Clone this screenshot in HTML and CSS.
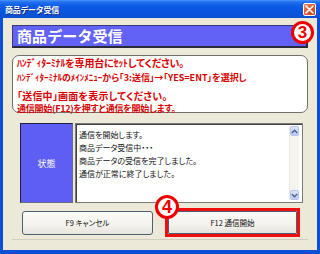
FILE: index.html
```html
<!DOCTYPE html>
<html lang="ja">
<head>
<meta charset="utf-8">
<title>商品データ受信</title>
<link rel="stylesheet" href="styles.css">
</head>
<body>
<div class="window">
  <div class="titlebar">
    <span class="title">商品データ受信</span>
    <span class="close">
      <svg width="9" height="9" viewBox="0 0 9 9"><path d="M1 1L8 8M8 1L1 8" stroke="#fff" stroke-width="1.6" stroke-linecap="round"/></svg>
    </span>
  </div>
  <div class="body">
    <div class="banner">商品データ受信</div>
    <div class="notice">
      <div class="line l1">ﾊﾝﾃﾞｨﾀｰﾐﾅﾙを専用台にｾｯﾄしてください。</div>
      <div class="line l2">ﾊﾝﾃﾞｨﾀｰﾐﾅﾙのﾒｲﾝﾒﾆｭｰから「3:送信」→「YES=ENT」を選択し</div>
      <div class="line l3">「送信中」画面を表示してください。</div>
      <div class="line l4">通信開始(F12)を押すと通信を開始します。</div>
    </div>
    <div class="status">
      <div class="status-label">状態</div>
      <div class="status-box">
        <div class="log">
          <div>通信を開始します。</div>
          <div>商品データ受信中・・・</div>
          <div>商品データの受信を完了しました。</div>
          <div>通信が正常に終了しました。</div>
        </div>
        <div class="scrollbar">
          <span class="sb-btn"><svg width="7" height="5" viewBox="0 0 7 5"><path d="M0.8 4L3.5 1.3L6.2 4" fill="none" stroke="#4d6185" stroke-width="1.4"/></svg></span>
          <span class="sb-track"></span>
          <span class="sb-btn"><svg width="7" height="5" viewBox="0 0 7 5"><path d="M0.8 1L3.5 3.7L6.2 1" fill="none" stroke="#4d6185" stroke-width="1.4"/></svg></span>
        </div>
      </div>
    </div>
    <div class="buttons">
      <div class="btn btn-cancel">F9 キャンセル</div>
      <div class="highlight"><div class="btn btn-start">F12 通信開始</div></div>
    </div>
    <div class="footer-line"></div>
  </div>
  <span class="badge badge3">3</span>
  <span class="badge badge4">4</span>
</div>
</body>
</html>
```
FILE: styles.css
```css
* { box-sizing: border-box; }
html, body { margin: 0; padding: 0; background: #fff; }
body { font-family: "Noto Sans CJK JP", "Noto Sans", sans-serif; }

.window {
  position: relative;
  width: 320px;
  height: 254px;
  display: flex;
  flex-direction: column;
  background: #0a4fd6;
}

.titlebar {
  height: 18px;
  flex: none;
  display: flex;
  align-items: center;
  justify-content: space-between;
  padding: 0 4px 0 5px;
  background: linear-gradient(#4a93ff 0, #2270ee 2px, #0c5be6 6px, #0a55de 12px, #0b50d2 18px);
}
.title {
  color: #fff;
  font-size: 8px;
  font-weight: bold;
  letter-spacing: -0.3px;
  text-shadow: 1px 1px 0 #0a2a80;
}
.close {
  width: 13px;
  height: 13px;
  border: 1px solid #fff;
  border-radius: 2px;
  background: linear-gradient(135deg, #f28a6a 0, #e05a34 45%, #c8401c 100%);
  display: flex;
  align-items: center;
  justify-content: center;
  margin-top: 1px;
}
.close svg { display: block; }

.body {
  flex: 1;
  margin: 0 3px 4px 3px;
  background: #ece9d8;
  display: flex;
  flex-direction: column;
  padding: 7px 9px 0 9px;
}

.banner {
  height: 23px;
  background: #6262f6;
  border-top: 1px solid #3a3a7a;
  border-left: 1px solid #3a3a7a;
  border-right: 2px solid #2a2a3a;
  border-bottom: 2px solid #2a2a3a;
  color: #fff;
  font-size: 15px;
  font-weight: bold;
  line-height: 20px;
  padding-left: 4px;
  letter-spacing: 0.1px;
}

.notice {
  margin-top: 7px;
  height: 58px;
  background: #fff;
  border: 1px solid #6f6f6f;
  border-radius: 7px;
  padding-left: 4px;
  color: #d80000;
  font-size: 9px;
  font-weight: bold;
  font-feature-settings: "palt";
  white-space: nowrap;
}
.l1 { line-height: 13px; font-size: 10px; letter-spacing: -0.2px; }
.l2 { line-height: 18px; }
.l3 { line-height: 17px; font-size: 10px; letter-spacing: 0.2px; }
.l4 { line-height: 9px; letter-spacing: -0.25px; }

.status {
  margin: 10px 5px 0 8px;
  height: 80px;
  display: flex;
  gap: 2px;
}
.status-label {
  width: 53px;
  background: #5e5ef4;
  border-top: 1px solid #202040;
  border-left: 1px solid #202040;
  border-right: 1px solid #6a6a90;
  border-bottom: 1px solid #6a6a90;
  color: #fff;
  font-size: 9px;
  display: flex;
  align-items: center;
  justify-content: center;
}
.status-box {
  flex: 1;
  background: #fff;
  border: 1px solid #7a7a7a;
  box-shadow: inset 1px 1px 0 #404040;
  display: flex;
  padding: 2px 3px 2px 2px;
}
.log {
  flex: 1;
  font-size: 8px;
  line-height: 13px;
  color: #111;
  padding: 2px 0 0 1px;
  white-space: nowrap;
  font-feature-settings: "palt";
}
.scrollbar {
  width: 10px;
  display: flex;
  flex-direction: column;
  background: #f5f4ee;
  border-left: 1px solid #ebe9e0;
}
.sb-btn {
  height: 10px;
  background: linear-gradient(#dbe5fd, #bccdf7);
  border: 1px solid #b4c4ee;
  border-radius: 2px;
  display: flex;
  align-items: center;
  justify-content: center;
}
.sb-btn svg { display: block; }
.sb-track { flex: 1; }

.buttons {
  margin-top: 5px;
  display: flex;
  align-items: center;
  gap: 12px;
  padding-left: 10px;
}
.btn {
  background: linear-gradient(#fbfbf8 0, #f3f2ec 60%, #e6e4dc 100%);
  border: 1px solid #4c5f74;
  border-radius: 3px;
  font-size: 7.5px;
  color: #111;
  display: flex;
  align-items: center;
  justify-content: center;
  font-feature-settings: "palt";
}
.btn-cancel {
  width: 131px;
  height: 24px;
}
.highlight {
  width: 135px;
  height: 29px;
  border: 3px solid #ee1010;
  display: flex;
}
.btn-start {
  flex: 1;
  border-radius: 1px;
}
.footer-line {
  margin-top: 2px;
  border-top: 1px solid #d2cebf;
}

.badge {
  position: absolute;
  border: 3px solid #ee0000;
  border-radius: 50%;
  background: #fff;
  color: #ee0000;
  font-family: "Liberation Sans", Arial, sans-serif;
  font-weight: bold;
  display: flex;
  align-items: center;
  justify-content: center;
}
.badge3 {
  left: 291px;
  top: 21px;
  width: 23px;
  height: 23px;
  font-size: 17px;
}
.badge4 {
  left: 155px;
  top: 195px;
  width: 24px;
  height: 24px;
  font-size: 18px;
}
```
